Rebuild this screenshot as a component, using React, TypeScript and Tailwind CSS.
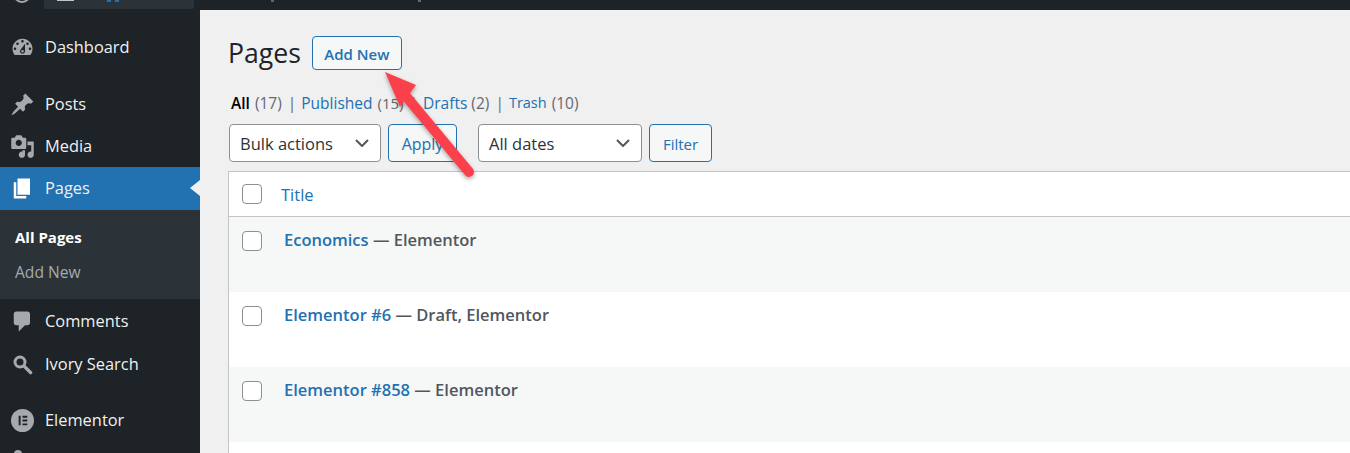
import React from "react";

const font = "[font-family:'Open_Sans',sans-serif]";

function Icon({ d, className }: { d: string; className?: string }) {
  return (
    <svg viewBox="0 0 20 20" className={className ?? "w-[25px] h-[25px] fill-[#a7aaad]"}>
      <path d={d} />
    </svg>
  );
}

const icons = {
  dashboard:
    "M3.76 16h12.48c1.1-1.37 1.76-3.11 1.76-5 0-4.42-3.58-8-8-8s-8 3.58-8 8c0 1.89.66 3.63 1.76 5zM10 4c.55 0 1 .45 1 1s-.45 1-1 1-1-.45-1-1 .45-1 1-1zM6 6c.55 0 1 .45 1 1s-.45 1-1 1-1-.45-1-1 .45-1 1-1zm8 0c.55 0 1 .45 1 1s-.45 1-1 1-1-.45-1-1 .45-1 1-1zm-5.37 5.55L12 7v6c0 1.1-.9 2-2 2s-2-.9-2-2c0-.57.24-1.08.63-1.45zM4 10c.55 0 1 .45 1 1s-.45 1-1 1-1-.45-1-1 .45-1 1-1zm12 0c.55 0 1 .45 1 1s-.45 1-1 1-1-.45-1-1 .45-1 1-1zm-5 3c0-.55-.45-1-1-1s-1 .45-1 1 .45 1 1 1 1-.45 1-1z",
  pin: "M10.44 3.02l1.82-1.82 6.36 6.35-1.83 1.82c-1.05-.68-2.48-.57-3.41.36l-.75.75c-.92.93-1.04 2.35-.35 3.41l-1.83 1.82-2.41-2.41-2.8 2.79c-.42.42-3.38 2.71-3.8 2.29s1.86-3.39 2.28-3.81l2.79-2.79L4.1 9.36l1.83-1.82c1.05.69 2.48.57 3.41-.36l.75-.75c.93-.92 1.04-2.35.35-3.41z",
  media:
    "M13 11V4c0-.55-.45-1-1-1h-1.67L9 1H5L3.67 3H2c-.55 0-1 .45-1 1v7c0 .55.45 1 1 1h10c.55 0 1-.45 1-1zM7 4.5c1.38 0 2.5 1.12 2.5 2.5S8.38 9.5 7 9.5 4.5 8.38 4.5 7 5.62 4.5 7 4.5zM14 6h5v10.5c0 1.38-1.12 2.5-2.5 2.5S14 17.88 14 16.5s1.12-2.5 2.5-2.5c.17 0 .34.02.5.05V9h-3V6zm-4 8.05V13h2v3.5c0 1.38-1.12 2.5-2.5 2.5S7 17.88 7 16.5 8.12 14 9.5 14c.17 0 .34.02.5.05z",
  page: "M6 15V2h10v13H6zm-1 1h8v2H3V5h2v11z",
  comments: "M5 2h9c1.1 0 2 .9 2 2v7c0 1.1-.9 2-2 2h-2l-5 5v-5H5c-1.1 0-2-.9-2-2V4c0-1.1.9-2 2-2z",
};

function MenuItem({
  icon,
  label,
  active,
  height = "h-[42px]",
}: {
  icon: React.ReactNode;
  label: string;
  active?: boolean;
  height?: string;
}) {
  return (
    <div className={`relative flex items-center ${height} pl-[10px] ${active ? "bg-[#2271b1] pb-px" : ""}`}>
      <div className="w-[35px] flex items-center">{icon}</div>
      <span className="text-[16.4px] text-[#f0f0f1]">{label}</span>
      {active && (
        <div className="absolute right-0 top-[13px] border-y-[8px] border-r-[10px] border-y-transparent border-r-[#f0f0f1]" />
      )}
    </div>
  );
}

function Select({ label, width }: { label: string; width: string }) {
  return (
    <div className={`${width} h-[38px] flex items-center justify-between pl-[10px] pr-[11px] bg-white border border-[#8c8f94] rounded-[4px] text-[16.5px] text-[#2c3338]`}>
      <span className="mt-[2px]">{label}</span>
      <svg viewBox="0 0 14 8" className="w-[14px] h-[8px] fill-none stroke-[#50575e] stroke-2">
        <path d="M1 1l6 6 6-6" />
      </svg>
    </div>
  );
}

function Button({ label, className }: { label: string; className: string }) {
  return (
    <div className={`${className} flex items-center justify-center pt-[2px] border border-[#2271b1] rounded-[4px] bg-[#f6f7f7] text-[#2271b1]`}>
      {label}
    </div>
  );
}

function Row({ title, state, striped }: { title: string; state: string; striped?: boolean }) {
  return (
    <div className={`flex h-[75px] pl-[13px] ${striped ? "bg-[#f6f7f7]" : "bg-white"}`}>
      <div className="mt-[14px] w-[20px] h-[20px] bg-white border border-[#8c8f94] rounded-[4px]" />
      <div className="ml-[22px] mt-[10px] h-[26px] text-[16.5px] font-semibold text-[#50575e] leading-[26px]">
        <span className="text-[#2271b1]">{title}</span> — {state}
      </div>
    </div>
  );
}

function Sep() {
  return <span className="ml-[6px] mr-[5px] text-[#646970]">|</span>;
}

export default function App() {
  return (
    <div className={`${font} relative w-[1350px] h-[453px] overflow-hidden flex flex-col bg-[#f0f0f1]`}>
      {/* admin bar, only the bottom edge is in frame */}
      <div className="relative h-[10px] shrink-0 bg-[#1d2327] flex">
        <div className="ml-[13px] mt-[-15px] w-[18px] h-[18px] rounded-full border-2 border-[#a7aaad]" />
        <div className="ml-[13px] w-[150px] h-[9px] bg-[#2c3338] rounded-b-[2px] flex items-start">
          <div className="ml-[13px] w-[17px] h-px bg-[#c3c4c7]" />
          <div className="ml-[33px] w-[4px] h-[2px] bg-[#2271b1]" />
          <div className="ml-[4px] w-[4px] h-[2px] bg-[#2271b1]" />
        </div>
        <div className="absolute left-[271px] top-0 w-[3px] h-[2px] bg-[#646970]" />
        <div className="absolute left-[418px] top-0 w-[3px] h-[2px] bg-[#646970]" />
      </div>

      <div className="flex flex-1 min-h-0">
        {/* sidebar */}
        <div className="w-[200px] shrink-0 bg-[#1d2327] pt-[16px] overflow-hidden">
          <MenuItem label="Dashboard" icon={<Icon d={icons.dashboard} />} />
          <div className="h-[15px]" />
          <MenuItem label="Posts" icon={<Icon d={icons.pin} />} />
          <MenuItem label="Media" icon={<Icon d={icons.media} />} />
          <MenuItem
            label="Pages"
            active
            height="h-[43px]"
            icon={<Icon d={icons.page} className="w-[25px] h-[25px] fill-white" />}
          />
          <div className="h-[89px] bg-[#2c3338] pl-[15px] pt-[14px]">
            <div className="h-[26px] leading-[26px] text-[15px] font-bold text-white">All Pages</div>
            <div className="mt-[9px] h-[26px] leading-[26px] text-[15.6px] text-[#a7aaad]">Add New</div>
          </div>
          <MenuItem label="Comments" height="h-[44px]" icon={<Icon d={icons.comments} />} />
          <MenuItem
            label="Ivory Search"
            icon={
              <svg viewBox="0 0 20 20" className="w-[25px] h-[25px] fill-none stroke-[#a7aaad]">
                <circle cx="8" cy="8" r="4" strokeWidth="2.4" />
                <path d="M11.5 11.5l5 5" strokeWidth="2.8" strokeLinecap="round" />
              </svg>
            }
          />
          <div className="h-[14px]" />
          <MenuItem
            label="Elementor"
            icon={
              <svg viewBox="0 0 24 24" className="ml-px w-[23px] h-[23px]">
                <circle cx="12" cy="12" r="12" fill="#a7aaad" />
                <path d="M8 7h2v10H8zM12 7h5v2h-5zM12 11h5v2h-5zM12 15h5v2h-5z" fill="#1d2327" />
              </svg>
            }
          />
          <div className="mt-[9px] ml-[14px] w-[8px] h-[8px] rounded-full bg-[#a7aaad]" />
        </div>

        {/* main */}
        <div className="flex-1 min-w-0 flex flex-col pl-[28px] text-[16px]">
          <div className="flex items-center h-[34px] mt-[26px]">
            <div className="text-[26.6px] text-[#1d2327] leading-[34px]">Pages</div>
            <Button label="Add New" className="ml-[11px] w-[90px] h-[34px] text-[15px] font-semibold" />
          </div>
          <div className="mt-[20px] h-[26px] leading-[26px] text-[15.5px] text-[#646970] flex pl-[3px]">
            <span className="font-semibold text-black">All</span>
            <span className="ml-[5px]">(17)</span>
            <Sep />
            <span className="text-[#2271b1]">Published</span>
            <span className="ml-[5px] text-[15px]">(15)</span>
            <Sep />
            <span className="text-[#2271b1]">Drafts</span>
            <span className="ml-[4px]">(2)</span>
            <Sep />
            <span className="text-[#2271b1] text-[14.5px]">Trash</span>
            <span className="ml-[5px]">(10)</span>
          </div>
          <div className="flex mt-[8px] pl-px h-[38px]">
            <Select label="Bulk actions" width="w-[152px]" />
            <Button label="Apply" className="ml-[7px] w-[69px] h-[38px]" />
            <div className="w-[21px]" />
            <Select label="All dates" width="w-[164px]" />
            <Button label="Filter" className="ml-[7px] w-[63px] h-[38px] text-[15px]" />
          </div>
          <div className="flex-1 mt-[9px] border-l border-t border-[#c3c4c7] bg-white">
            <div className="flex items-center h-[45px] pl-[13px] border-b border-[#c3c4c7]">
              <div className="w-[20px] h-[20px] bg-white border border-[#8c8f94] rounded-[4px]" />
              <span className="ml-[19px] mt-[2px] text-[#2271b1] text-[16.5px]">Title</span>
            </div>
            <Row title="Economics" state="Elementor" striped />
            <Row title="Elementor #6" state="Draft, Elementor" />
            <Row title="Elementor #858" state="Elementor" striped />
          </div>
        </div>
      </div>

      {/* red annotation arrow */}
      <svg className="absolute left-0 top-0 pointer-events-none" width="1350" height="453">
        <defs>
          <filter id="arrowShadow" x="-30%" y="-30%" width="160%" height="160%">
            <feDropShadow dx="0" dy="2" stdDeviation="2" floodColor="#000" floodOpacity="0.35" />
          </filter>
        </defs>
        <g filter="url(#arrowShadow)">
          <path d="M405 95L469 172" stroke="#f9404b" strokeWidth="10" strokeLinecap="round" fill="none" />
          <path d="M385 72L416 85L400 107Z" fill="#f9404b" />
        </g>
      </svg>
    </div>
  );
}
